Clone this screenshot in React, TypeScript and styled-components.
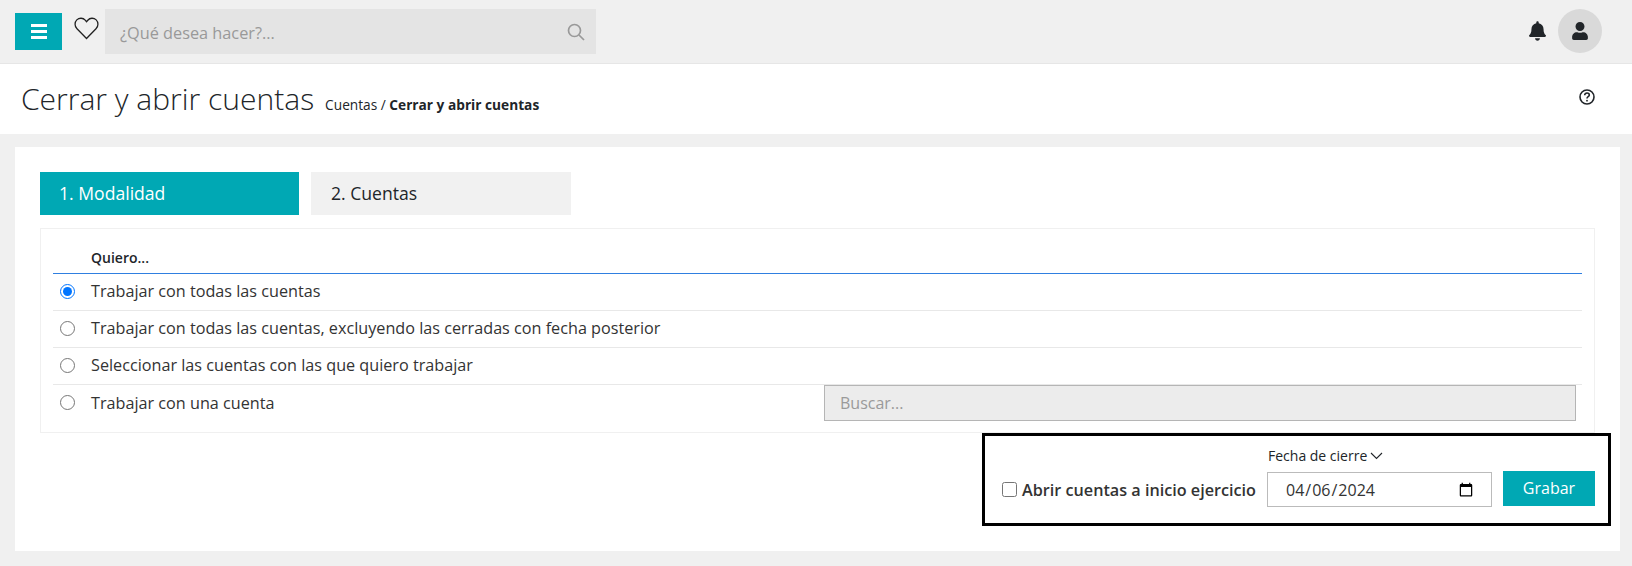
import React from "react";
import styled, { createGlobalStyle } from "styled-components";

const Global = createGlobalStyle`
  html, body { margin: 0; padding: 0; background: #f0f0f0; }
  body { font-family: "Open Sans", "Noto Sans", sans-serif; color: #212529; }
  * { box-sizing: border-box; }
`;
const Page = styled.div`
  width: 1632px;
  height: 566px;
  overflow: hidden;
  background: #f0f0f0;
`;
const TopBar = styled.header`
  height: 64px;
  display: flex;
  align-items: flex-start;
  padding: 9px 30px 0 15px;
  border-bottom: 1px solid #e6e6e6;
`;
const MenuButton = styled.button`
  width: 47px;
  height: 37px;
  margin-top: 4px;
  padding: 0;
  border: 0;
  background: #00a8b4;
  display: flex;
  align-items: center;
  justify-content: center;
`;
const HeartBox = styled.div`
  width: 43px;
  height: 37px;
  margin-top: 1px;
  padding-right: 6px;
  display: flex;
  align-items: center;
  justify-content: flex-end;
`;
const SearchBar = styled.div`
  width: 491px;
  height: 45px;
  background: #e4e4e4;
  display: flex;
  align-items: center;
  justify-content: space-between;
  padding: 0 11px 0 15px;
  font-size: 16.3px;
  color: #999;
`;
const SearchHint = styled.span`
  padding-top: 2px;
`;
const Spacer = styled.div`
  flex: 1;
`;
const BellBox = styled.div`
  width: 20px;
  height: 44px;
  margin-right: 11px;
  display: flex;
  align-items: center;
  justify-content: center;
`;
const Avatar = styled.div`
  width: 44px;
  height: 44px;
  border-radius: 50%;
  background: #d9d9d9;
  display: flex;
  align-items: center;
  justify-content: center;
`;
const TitleBar = styled.div`
  height: 70px;
  background: #fff;
  display: flex;
  align-items: center;
  padding: 0 37px 0 21px;
`;
const Title = styled.h1`
  margin: 0;
  font-size: 30px;
  font-weight: 300;
  line-height: 40px;
  color: #212529;
`;
const Crumbs = styled.div`
  margin-left: 11px;
  margin-top: 10px;
  font-size: 13.7px;
  color: #212529;
  b { font-weight: 700; }
`;
const HelpIcon = styled.svg`
  margin-bottom: 4px;
`;
const Card = styled.main`
  margin: 13px 12px 0 15px;
  height: 404px;
  background: #fff;
  padding: 25px 25px 0 25px;
`;
const Tabs = styled.div`
  display: flex;
  gap: 12px;
`;
const Tab = styled.div<{ $active?: boolean }>`
  width: ${(p) => (p.$active ? 259 : 260)}px;
  height: 43px;
  display: flex;
  align-items: center;
  padding-left: ${(p) => (p.$active ? 19 : 20)}px;
  padding-bottom: 2px;
  font-size: 17.6px;
  background: ${(p) => (p.$active ? "#00a8b4" : "#f1f1f1")};
  color: ${(p) => (p.$active ? "#fff" : "#212529")};
`;
const TableBox = styled.section`
  margin-top: 13px;
  height: 205px;
  border: 1px solid #f0f0f0;
  padding: 18px 12px 0 12px;
`;
const HeadRow = styled.div`
  height: 27px;
  padding-left: 38px;
  border-bottom: 1px solid #2f7fe0;
  font-size: 14px;
  font-weight: 600;
  line-height: 22px;
`;
const Row = styled.label<{ $last?: boolean }>`
  height: 37px;
  display: flex;
  align-items: center;
  border-bottom: ${(p) => (p.$last ? "0" : "1px solid #e8e8e8")};
  font-size: 16.2px;
  line-height: 22px;
  padding-bottom: 2px;
  color: #333;
`;
const Radio = styled.input`
  width: 15px;
  height: 15px;
  margin: 0 16px 0 7px;
  accent-color: #0075ff;
`;
const RowText = styled.span`
  width: 733px;
`;
const SearchInput = styled.input`
  width: 752px;
  height: 36px;
  margin-top: 1px;
  padding: 0 15px 1px;
  border: 1px solid #b5b5b5;
  background: #ececec;
  font: 16px "Open Sans", sans-serif;
  &::placeholder { color: #9a9a9a; opacity: 1; }
`;
const FooterWrap = styled.div`
  display: flex;
  justify-content: flex-end;
  margin-right: -16px;
`;
const Highlight = styled.div`
  width: 629px;
  height: 93px;
  border: 3px solid #000;
  display: flex;
  align-items: flex-end;
  justify-content: flex-end;
  padding: 0 13px 16px 17px;
`;
const CheckLabel = styled.label`
  display: flex;
  align-items: center;
  height: 35px;
  font-size: 16.2px;
  font-weight: 600;
  color: #333;
  margin-right: 11px;
  white-space: nowrap;
`;
const Check = styled.input`
  width: 15px;
  height: 15px;
  margin: 0 5px 0 0;
`;
const DateField = styled.div`
  display: flex;
  flex-direction: column;
  margin-right: 11px;
`;
const DateLabel = styled.div`
  font-size: 14px;
  line-height: 18px;
  margin: 0 0 7px 1px;
  display: flex;
  align-items: center;
  gap: 3px;
`;
const DateInput = styled.input`
  width: 225px;
  height: 35px;
  border: 1px solid #bbb;
  background: #fff;
  padding: 0 15px 0 17px;
  font: 16px "Open Sans", sans-serif;
  color: #333;
`;
const SaveButton = styled.button`
  width: 92px;
  height: 35px;
  margin-bottom: 1px;
  padding: 0 0 2px;
  border: 0;
  background: #00a8b4;
  color: #fff;
  font: 16px "Open Sans", sans-serif;
`;

const options = [
  "Trabajar con todas las cuentas",
  "Trabajar con todas las cuentas, excluyendo las cerradas con fecha posterior",
  "Seleccionar las cuentas con las que quiero trabajar",
];

export default function App() {
  return (
    <Page>
      <Global />
      <TopBar>
        <MenuButton aria-label="Menú">
          <svg width="16" height="15" viewBox="0 0 16 15">
            <rect y="0" width="16" height="3" fill="#fff" />
            <rect y="6" width="16" height="3" fill="#fff" />
            <rect y="12" width="16" height="3" fill="#fff" />
          </svg>
        </MenuButton>
        <HeartBox>
          <svg width="25" height="23" viewBox="0 0 25 23" fill="none" stroke="#222" strokeWidth="1.3">
            <path d="M12.5 21.5 3 11.8C.4 9.1.5 5.2 2.8 2.9c2.4-2.3 6.3-2.2 8.4.3l1.3 1.5 1.3-1.5c2.1-2.5 6-2.6 8.4-.3 2.3 2.3 2.4 6.2-.2 8.9z" />
          </svg>
        </HeartBox>
        <SearchBar>
          <SearchHint>¿Qué desea hacer?...</SearchHint>
          <svg width="18" height="18" viewBox="0 0 18 18" fill="none" stroke="#999" strokeWidth="1.7">
            <circle cx="7.5" cy="7.5" r="6" />
            <path d="m12 12 5 5" />
          </svg>
        </SearchBar>
        <Spacer />
        <BellBox>
          <svg width="17" height="20" viewBox="0 0 448 512" fill="#212529">
            <path d="M224 512c35.3 0 64-28.7 64-64H160c0 35.3 28.7 64 64 64zm215.4-149.700c-19.300-20.800-55.500-52-55.500-154.300 0-77.700-54.500-139.900-127.900-155.200V32c0-17.700-14.300-32-32-32s-32 14.300-32 32v20.800C118.600 68.100 64.100 130.300 64.100 208c0 102.300-36.200 133.500-55.500 154.300-6 6.400-8.700 14.100-8.600 21.700.1 16.400 13 32 32.100 32h383.800c19.100 0 32-15.600 32.100-32 .1-7.600-2.600-15.300-8.600-21.700z" />
          </svg>
        </BellBox>
        <Avatar>
          <svg width="16" height="18" viewBox="0 0 448 512" fill="#212529">
            <path d="M224 256c70.700 0 128-57.300 128-128S294.700 0 224 0 96 57.300 96 128s57.300 128 128 128zm89.600 32h-16.700c-22.200 10.200-46.900 16-72.900 16s-50.600-5.800-72.900-16h-16.700C60.200 288 0 348.200 0 422.400V464c0 26.500 21.500 48 48 48h352c26.500 0 48-21.500 48-48v-41.600c0-74.200-60.200-134.400-134.400-134.400z" />
          </svg>
        </Avatar>
      </TopBar>
      <TitleBar>
        <Title>Cerrar y abrir cuentas</Title>
        <Crumbs>
          Cuentas / <b>Cerrar y abrir cuentas</b>
        </Crumbs>
        <Spacer />
        <HelpIcon width="16" height="16" viewBox="0 0 16 16" fill="none" stroke="#212529">
          <circle cx="8" cy="8" r="7" strokeWidth="1.6" />
          <path d="M5.7 6.2c0-1.4 1-2.200 2.300-2.200s2.300.8 2.300 2c0 1.700-2.300 1.600-2.300 3.400" strokeWidth="1.6" />
          <circle cx="8" cy="11.7" r=".9" fill="#212529" stroke="none" />
        </HelpIcon>
      </TitleBar>
      <Card>
        <Tabs>
          <Tab $active>1. Modalidad</Tab>
          <Tab>2. Cuentas</Tab>
        </Tabs>
        <TableBox>
          <HeadRow>Quiero...</HeadRow>
          {options.map((o, i) => (
            <Row key={o}>
              <Radio type="radio" name="q" defaultChecked={i === 0} />
              <RowText>{o}</RowText>
            </Row>
          ))}
          <Row $last>
            <Radio type="radio" name="q" />
            <RowText>Trabajar con una cuenta</RowText>
            <SearchInput placeholder="Buscar..." readOnly />
          </Row>
        </TableBox>
        <FooterWrap>
          <Highlight>
            <CheckLabel>
              <Check type="checkbox" />
              Abrir cuentas a inicio ejercicio
            </CheckLabel>
            <DateField>
              <DateLabel>
                Fecha de cierre
                <svg width="13" height="8" viewBox="0 0 13 8" fill="none" stroke="#212529" strokeWidth="1.1">
                  <path d="m1 1 5.500 5.500L12 1" />
                </svg>
              </DateLabel>
              <DateInput type="date" defaultValue="2024-04-06" />
            </DateField>
            <SaveButton>Grabar</SaveButton>
          </Highlight>
        </FooterWrap>
      </Card>
    </Page>
  );
}
